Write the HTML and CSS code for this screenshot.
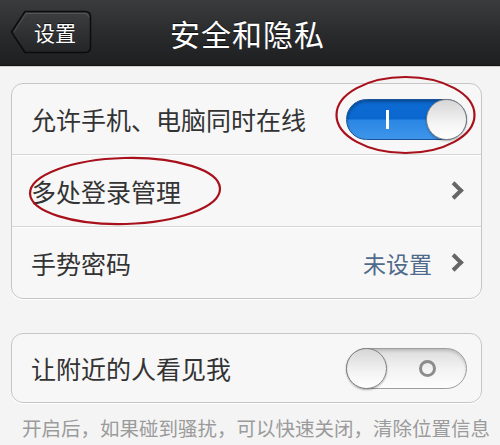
FILE: index.html
```html
<!DOCTYPE html>
<html>
<head>
  <title>安全和隐私</title>
  <meta name="viewport" content="width=device-width, initial-scale=1.0">
  <link rel="stylesheet" href="styles.css">
</head>
<body>
  <div class="navbar">
    <div class="nav-left">
      <button class="back">
        <svg class="back-shape" width="82" height="44" viewBox="0 0 82 44">
          <defs>
            <linearGradient id="backFill" x1="0" y1="0" x2="0" y2="1">
              <stop offset="0" stop-color="#3d3e40"/>
              <stop offset="1" stop-color="#242527"/>
            </linearGradient>
          </defs>
          <path d="M1.5 22 L15 1.5 H75 Q80.5 1.5 80.5 7 V37 Q80.5 42.5 75 42.5 H15 Z" fill="url(#backFill)" stroke="#0c0c0d" stroke-width="1.5" stroke-linejoin="round"/>
          <path d="M4 22 L16 3.5 H75 Q78.5 3.5 78.5 7" fill="none" stroke="rgba(255,255,255,0.12)" stroke-width="1"/>
        </svg>
        <span class="back-label">设置</span>
      </button>
    </div>
    <h1 class="title">安全和隐私</h1>
    <div class="nav-right"></div>
  </div>

  <div class="group">
    <div class="row">
      <span class="label">允许手机、电脑同时在线</span>
      <div class="switch on">
        <span class="mark-i"></span>
        <span class="knob"></span>
      </div>
    </div>
    <div class="row">
      <span class="label">多处登录管理</span>
      <span class="chevron"></span>
    </div>
    <div class="row">
      <span class="label">手势密码</span>
      <div class="detail">
        <span class="value">未设置</span>
        <span class="chevron"></span>
      </div>
    </div>
  </div>

  <div class="group second">
    <div class="row">
      <span class="label">让附近的人看见我</span>
      <div class="switch off">
        <span class="knob"></span>
        <span class="mark-o"></span>
      </div>
    </div>
  </div>

  <p class="note">开启后，如果碰到骚扰，可以快速关闭，清除位置信息</p>

  <!-- red pen marks drawn over the screenshot -->
  <svg class="marks" width="500" height="445" viewBox="0 0 500 445">
    <ellipse cx="405.5" cy="115" rx="69" ry="38" fill="none" stroke="#a8111b" stroke-width="2.2"/>
    <ellipse cx="125" cy="191" rx="95" ry="33" fill="none" stroke="#a8111b" stroke-width="2.2" transform="rotate(-1.5 125 191)"/>
  </svg>
</body>
</html>
```

FILE: styles.css
```css
body {
  margin: 0;
  width: 500px;
  height: 445px;
  overflow: hidden;
  position: relative;
  background: #f4f4f4;
  font-family: "Noto Sans CJK SC", "Noto Sans", sans-serif;
  color: #333;
}

/* Nav bar */
.navbar {
  height: 65px;
  display: grid;
  grid-template-columns: 1fr auto 1fr;
  align-items: center;
  background: linear-gradient(#3b3c3e, #2a2b2d 50%, #1e1f21);
  border-bottom: 1px solid #111;
  box-shadow: 0 1px 0 #d0d0d0;
}
.nav-left {
  padding-left: 10px;
}
.back {
  position: relative;
  width: 82px;
  height: 44px;
  padding: 0 0 0 8px;
  border: none;
  background: none;
  display: flex;
  align-items: center;
  justify-content: center;
  margin-top: -1px;
}
.back-shape {
  position: absolute;
  left: 0;
  top: 0;
}
.back-label {
  position: relative;
  color: #fff;
  font-family: "Noto Sans CJK SC", sans-serif;
  font-size: 21px;
  text-shadow: 0 -1px 0 rgba(0,0,0,0.6);
}
.title {
  margin: 0 0 0 -5px;
  font-size: 30px;
  font-weight: normal;
  color: #fff;
  letter-spacing: 1px;
  text-shadow: 0 -1px 0 rgba(0,0,0,0.6);
}

/* Groups */
.group {
  margin: 17px 18px 0 11px;
  border: 1px solid #c6c6c6;
  border-radius: 12px;
  background: #f7f7f7;
  box-shadow: 0 1px 0 #fff;
}
.group.second {
  margin-top: 34px;
}
.row {
  height: 71px;
  display: flex;
  align-items: center;
  justify-content: space-between;
  padding: 0 14px 0 19px;
  border-top: 1px solid #d6d6d6;
  box-shadow: inset 0 1px 0 #fff;
}
.row:first-child {
  border-top: none;
  height: 70px;
  box-shadow: none;
}
.second .row {
  height: 68px;
}
.label {
  font-size: 25px;
  color: #333;
}
.detail {
  display: flex;
  align-items: center;
  gap: 16px;
}
.value {
  font-size: 23px;
  color: #4f6b8c;
}
.chevron {
  width: 9px;
  height: 9px;
  border-top: 4px solid #666;
  border-right: 4px solid #666;
  transform: rotate(45deg);
  margin-right: 6px;
}

/* Switches */
.switch {
  width: 121px;
  height: 41px;
  box-sizing: border-box;
  border-radius: 21px;
  display: flex;
  align-items: center;
  justify-content: space-between;
}
.switch.on {
  background: linear-gradient(#0c6bd3, #0a67cf 48%, #2a87e4 52%, #3e95ea);
  border: 1px solid #1b5496;
  padding-left: 39px;
  box-shadow: inset 0 2px 3px rgba(0,0,0,0.3);
}
.switch.off {
  background: linear-gradient(#dcdcdc, #f2f2f2 50%, #fdfdfd);
  border: 1px solid #9d9d9d;
  padding-right: 30px;
  box-shadow: inset 0 2px 3px rgba(0,0,0,0.15);
}
.knob {
  width: 41px;
  height: 41px;
  box-sizing: border-box;
  border-radius: 50%;
  background: linear-gradient(#d6d6d6, #f4f4f4 60%, #fff);
  border: 1px solid #7f7f7f;
  box-shadow: 0 1px 2px rgba(0,0,0,0.3);
}
.switch.on .knob {
  margin-right: -1px;
}
.switch.off .knob {
  margin-left: -1px;
}
.mark-i {
  width: 3px;
  height: 19px;
  background: #fff;
}
.mark-o {
  width: 17px;
  height: 17px;
  box-sizing: border-box;
  border: 3px solid #8c8c8c;
  border-radius: 50%;
}

.note {
  margin: 10px 0 0 22px;
  font-size: 19.5px;
  color: #9b9b9b;
  white-space: nowrap;
}

.marks {
  position: absolute;
  left: 0;
  top: 0;
  pointer-events: none;
}
```
